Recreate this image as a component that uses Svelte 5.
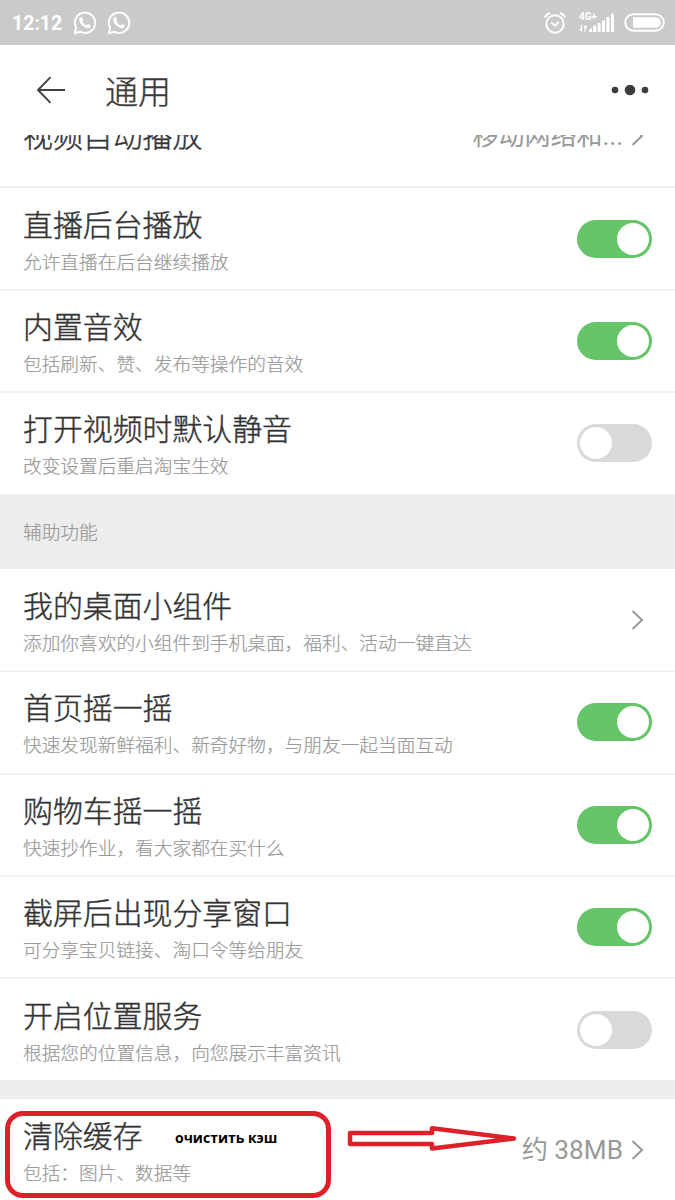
<script lang="ts">
  type Row = { title: string; desc?: string; on?: boolean; value?: string };

  const playback: Row[] = [
    { title: '视频自动播放', value: '移动网络和...' },
    { title: '直播后台播放', desc: '允许直播在后台继续播放', on: true },
    { title: '内置音效', desc: '包括刷新、赞、发布等操作的音效', on: true },
    { title: '打开视频时默认静音', desc: '改变设置后重启淘宝生效', on: false },
  ];
  const assist: Row[] = [
    { title: '我的桌面小组件', desc: '添加你喜欢的小组件到手机桌面，福利、活动一键直达' },
    { title: '首页摇一摇', desc: '快速发现新鲜福利、新奇好物，与朋友一起当面互动', on: true },
    { title: '购物车摇一摇', desc: '快速抄作业，看大家都在买什么', on: true },
    { title: '截屏后出现分享窗口', desc: '可分享宝贝链接、淘口令等给朋友', on: true },
    { title: '开启位置服务', desc: '根据您的位置信息，向您展示丰富资讯', on: false },
  ];
  const storage: Row[] = [
    { title: '清除缓存', desc: '包括：图片、数据等', value: '约 38MB' },
  ];

  let groups = $state([playback, assist, storage]);
</script>

{#snippet whatsapp()}
  <svg class="wa" width="24" height="24" viewBox="0 0 24 24">
    <path d="M1.800 22.200 3.200 16.800A10.200 10.200 0 1 1 7.200 20.700Z" fill="none" stroke="#fff" stroke-width="2" stroke-linejoin="round" />
    <path d="M7.600 6.200c.5-.4 1.200-.3 1.500.3l1 2.200c.2.600-.9 1.300-.7 1.800.9 1.600 2.200 2.900 3.900 3.700.6.2 1.300-1.200 1.900-1l2.300 1.100c.5.3.4 1.200 0 1.800-.8 1.100-2.300 1.500-3.900.9-3.600-1.200-6.200-3.700-7.200-7-.4-1.500.1-2.900 1.200-3.800Z" fill="#fff" />
  </svg>
{/snippet}

{#snippet row(item: Row)}
  <div class="row" class:single={!item.desc}>
    <div class="text">
      <span class="title">{item.title}</span>
      {#if item.desc}<span class="desc">{item.desc}</span>{/if}
    </div>
    {#if item.on !== undefined}
      <button
        type="button"
        class="switch"
        class:on={item.on}
        role="switch"
        aria-checked={item.on}
        aria-label={item.title}
        onclick={() => (item.on = !item.on)}
      ><span class="knob"></span></button>
    {:else}
      <div class="more">
        {#if item.value}<span class="value">{item.value}</span>{/if}
        <svg width="13" height="20" viewBox="0 0 13 20">
          <path d="M1.500 1 11 10 1.500 19" fill="none" stroke="#999" stroke-width="2" />
        </svg>
      </div>
    {/if}
  </div>
{/snippet}

<div class="screen">
  <div class="status">
    <span class="clock">12:12</span>
    {@render whatsapp()}
    {@render whatsapp()}
    <svg class="alarm" width="22" height="22" viewBox="0 0 22 22" fill="none" stroke="#fff" stroke-width="1.900">
      <circle cx="11" cy="12" r="8.700" />
      <path d="M7.200 10.500 11 13.800 15 10" />
      <path d="M.8 5.500Q2.500 2.200 6 1M21.200 5.500Q19.500 2.200 16 1" stroke-width="2.200" />
    </svg>
    <div class="network">
      <span class="net-type">4G+</span>
      <svg width="36" height="20" viewBox="0 0 36 20">
        <path d="M2.500 12v6M.8 16l1.700 2.300M6 18.500v-6M6 12.300l1.700 2.200" fill="none" stroke="#fff" stroke-width="1.300" />
        <path d="M10 16.500l3-1.500v4h-3zM14.200 12.500h3V19h-3zM18.600 10h3v9h-3zM23 7.500h3V19h-3zM27.400 4h3v15h-3zM31.900.8h3V19h-3z" fill="#fff" />
      </svg>
    </div>
    <svg class="battery" width="41" height="19" viewBox="0 0 41 19">
      <rect x="1.200" y="1.200" width="38.600" height="16.600" rx="8.300" fill="none" stroke="#fff" stroke-width="2" />
      <path d="M9 4.200h22.500a5.300 5.300 0 0 1 0 10.600H9z" fill="#fff" />
    </svg>
  </div>

  <header>
    <svg width="30" height="28" viewBox="0 0 30 28" fill="none" stroke="#404040" stroke-width="1.900">
      <path d="M14.500 1.200 2 14l12.500 12.800M2 14h27" />
    </svg>
    <h1>通用</h1>
    <svg class="dots" width="38" height="12" viewBox="0 0 38 12" fill="#3c3c3c">
      <circle cx="4" cy="6" r="3.300" />
      <circle cx="19" cy="6" r="5.300" />
      <circle cx="34" cy="6" r="3.300" />
    </svg>
  </header>

  <main>
    <div class="list">
      {#each groups[0] as item}{@render row(item)}{/each}
      <div class="section">辅助功能</div>
      {#each groups[1] as item}{@render row(item)}{/each}
      <div class="gap"></div>
      {#each groups[2] as item}{@render row(item)}{/each}
    </div>
  </main>

  <!-- translated hint drawn over the cache row -->
  <div class="frame"></div>
  <span class="note">очистить кэш</span>
  <svg class="arrow" width="172" height="30" viewBox="0 0 172 30">
    <path d="M3 9H85V4.200L167 14.500 85 24.500V20H3Z" fill="#fff" stroke="#de2129" stroke-width="4.500" stroke-linejoin="round" />
  </svg>
</div>

<style>
  :global(body) {
    margin: 0;
    background: #fff;
  }
  .screen {
    position: relative;
    display: flex;
    flex-direction: column;
    width: 675px;
    height: 1200px;
    overflow: hidden;
    background: #fff;
    font-family: Roboto, 'Noto Sans CJK SC', sans-serif;
  }

  .status {
    display: flex;
    align-items: center;
    flex: none;
    height: 45px;
    padding: 0 10px 0 12px;
    box-sizing: border-box;
    background: #cacaca;
    color: #fff;
  }
  .clock {
    width: 50px;
    padding-top: 2px;
    font-size: 19.500px;
    font-weight: 700;
    line-height: 43px;
  }
  .wa {
    margin-left: 10.500px;
  }
  .alarm {
    margin-left: auto;
  }
  .network {
    position: relative;
    height: 20px;
    margin: 0 9px 0 13px;
  }
  .net-type {
    position: absolute;
    top: -2px;
    left: 0;
    font-size: 10px;
    font-weight: 700;
    line-height: 11px;
  }
  .network svg,
  .battery {
    display: block;
  }

  header {
    display: flex;
    align-items: center;
    flex: none;
    height: 90px;
    padding: 0 26px 0 36px;
    box-sizing: border-box;
  }
  h1 {
    margin: 0 0 0 39px;
    padding-top: 5px;
    color: #3a3a3a;
    font-size: 33px;
    font-weight: 300;
    line-height: 44px;
    -webkit-text-stroke: 0.400px;
  }
  .dots {
    margin-left: auto;
  }

  main {
    flex: 1;
    min-height: 0;
    overflow: hidden;
  }
  /* scrolled so that the first row slides under the header */
  .list {
    margin-top: -51px;
  }
  .row {
    display: flex;
    align-items: center;
    justify-content: space-between;
    height: 102.400px;
    padding: 0 23px;
    box-sizing: border-box;
    border-top: 2px solid #f2f2f2;
  }
  .section + .row,
  .gap + .row {
    border-top-color: transparent;
  }
  .text {
    display: flex;
    flex-direction: column;
    padding-top: 6px;
  }
  .single .text {
    padding-top: 1px;
  }
  .gap + .row .text {
    padding-top: 3px;
  }
  .title {
    color: #333;
    font-size: 29.900px;
    font-weight: 300;
    line-height: 42px;
    -webkit-text-stroke: 0.400px;
  }
  .desc {
    color: #999;
    font-size: 18.700px;
    font-weight: 300;
    line-height: 32px;
    -webkit-text-stroke: 0.200px;
  }
  .more {
    display: flex;
    align-items: center;
    gap: 8px;
    margin-right: 8px;
  }
  .value {
    color: #999;
    font-size: 26.200px;
    line-height: 36px;
  }
  .single .value {
    font-size: 26px;
  }
  .gap + .row .more {
    padding-bottom: 2px;
  }
  .section {
    height: 74.800px;
    margin: 0.400px 0 -0.900px;
    padding: 3px 23px 0;
    box-sizing: border-box;
    background: #ededed;
    color: #999;
    font-size: 18.700px;
    font-weight: 300;
    line-height: 73px;
    -webkit-text-stroke: 0.200px;
  }
  .gap {
    height: 19px;
    background: #ededed;
  }

  .switch {
    display: flex;
    width: 75px;
    height: 38px;
    padding: 3px;
    box-sizing: border-box;
    border: 0;
    border-radius: 19px;
    background: #d9d9d9;
  }
  .switch.on {
    justify-content: flex-end;
    background: #65c368;
  }
  .knob {
    width: 32px;
    height: 32px;
    border-radius: 50%;
    background: #fff;
  }

  .frame {
    position: absolute;
    top: 1111px;
    left: 5px;
    width: 326px;
    height: 87px;
    box-sizing: border-box;
    border: 5px solid #de2129;
    border-radius: 18px;
  }
  .note {
    position: absolute;
    top: 1128px;
    left: 175px;
    color: #000;
    font-family: 'Open Sans', sans-serif;
    font-size: 14px;
    font-weight: 700;
    line-height: 19px;
  }
  .arrow {
    position: absolute;
    top: 1124px;
    left: 347px;
  }
</style>
